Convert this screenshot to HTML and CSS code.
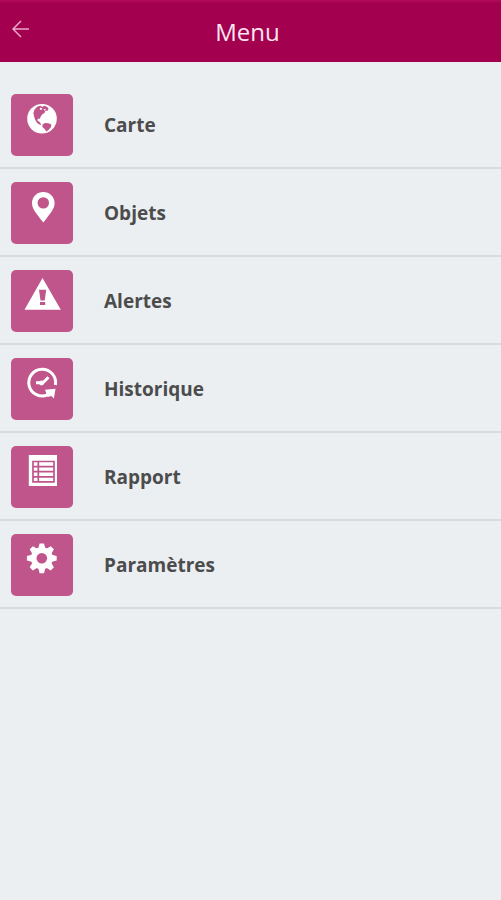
FILE: index.html
```html
<!DOCTYPE html>
<html lang="fr">
<head>
<meta charset="utf-8">
<meta name="viewport" content="width=device-width, initial-scale=1">
<title>Menu</title>
<link rel="stylesheet" href="styles.css">
</head>
<body>
<header class="topbar">
  <button class="back" type="button" aria-label="Retour">
    <svg class="back-icon" viewBox="0 0 18 18" aria-hidden="true"><path d="M17 9H1M9 1L1 9l8 8"/></svg>
  </button>
  <h1 class="title">Menu</h1>
</header>
<nav class="menu">
  <a class="item" href="#carte">
    <svg class="tile" viewBox="0 0 62 62" aria-hidden="true">
      <circle cx="31" cy="24.7" r="14.8"/>
      <path class="cut" d="M23.5 15.5l3-3 3-.7 2 1.2 1.5-1.2 2.5.8 2 1.7-.6 2.4-2.4-.2-.8 2.3-2.4 1.5-1.6 2.2-.8 2.2-2.2.1-.2 2 2.2 1.2 1.4 2.2-.8.7-3.2-2-1.8-3-1.2-3.200-.7-3.600z"/>
      <path class="cut" d="M31.500 30.500l2.400-1.600 3.500.4 3 1.300-.5 2.700-2.400 2.700-2.200 1.500-1.600-2.600-2.300-1.900z"/>
      <path d="M29.300 13.600l2 .8-.8 1.600-1.800-.6zM32.600 15.300l1.700-.5.3 1.300-1.500.4z"/>
    </svg>
    <span class="label">Carte</span>
  </a>
  <a class="item" href="#objets">
    <svg class="tile" viewBox="0 0 62 62" aria-hidden="true">
      <path fill-rule="evenodd" d="M32.3 10c-6.3 0-11.3 4.8-11.3 11 0 5.4 3.2 9.2 11.3 19.5C40.4 30.2 43.6 26.4 43.6 21c0-6.2-5-11-11.3-11zm0 5.200a5.700 5.700 0 1 1 0 11.400 5.700 5.700 0 0 1 0-11.400z"/>
    </svg>
    <span class="label">Objets</span>
  </a>
  <a class="item" href="#alertes">
    <svg class="tile" viewBox="0 0 62 62" aria-hidden="true">
      <path d="M31.5 8L49.8 39.700H13.500z"/>
      <path class="cut" d="M28 19.800h7.200l-1.500 10.700h-4.200zM29 32h5.200v3H29z"/>
    </svg>
    <span class="label">Alertes</span>
  </a>
  <a class="item" href="#historique">
    <svg class="tile" viewBox="0 0 62 62" aria-hidden="true">
      <path class="ring" d="M44.400 27A13.400 13.400 0 1 0 37 36.700"/>
      <path d="M34 31.700L44.500 30.700 42.900 40.400 40.300 37.900 36.700 39z"/>
      <path class="hands" d="M37.500 19.300L31.200 25.500M25 24.800h4"/>
      <circle cx="30.500" cy="25" r="2.400"/>
    </svg>
    <span class="label">Historique</span>
  </a>
  <a class="item" href="#rapport">
    <svg class="tile" viewBox="0 0 62 62" aria-hidden="true">
      <path d="M17.800 9H46v31H17.800z"/>
      <path class="grid" d="M22 15.500h21v20.400H22zM22 20.600h21M22 25.700h21M22 30.800h21M27.300 15.500v20.400"/>
    </svg>
    <span class="label">Rapport</span>
  </a>
  <a class="item" href="#parametres">
    <svg class="tile" viewBox="0 0 62 62" aria-hidden="true">
      <g transform="translate(30.8 24.3)">
        <circle r="11"/>
        <path id="tooth" d="M-3.500-10l1.300-4.900h4.400L3.500-10zM-3.500 10l1.300 4.900h4.400L3.500 10z"/>
        <use href="#tooth" transform="rotate(45)"/>
        <use href="#tooth" transform="rotate(90)"/>
        <use href="#tooth" transform="rotate(135)"/>
        <circle class="cut" r="5.300"/>
      </g>
    </svg>
    <span class="label">Paramètres</span>
  </a>
</nav>
</body>
</html>
```
FILE: styles.css
```css
* {
  box-sizing: border-box;
}

body {
  margin: 0;
  min-height: 100vh;
  background: #ebeff2;
  color: #4c4c4c;
  font-family: "Open Sans", "Noto Sans", sans-serif;
}

.topbar {
  display: grid;
  grid-template-columns: 40px 1fr 40px;
  align-items: center;
  height: 62px;
  padding-right: 6px;
  background: #a3004f;
  border-top: 2px solid #b00858;
}

.back {
  display: flex;
  padding: 0 0 6px 12px;
  border: 0;
  background: none;
  cursor: pointer;
}

.back-icon {
  width: 18px;
  height: 18px;
  fill: none;
  stroke: #eba9cb;
  stroke-width: 1.5;
}

.title {
  margin: 0;
  color: #fbe6f0;
  font-size: 24px;
  font-weight: 400;
  line-height: 32px;
  text-align: center;
}

.menu {
  padding-top: 19px;
}

.item {
  display: flex;
  align-items: center;
  gap: 31px;
  height: 88px;
  padding: 2px 11px 0;
  border-bottom: 2px solid #d6dbde;
  color: inherit;
  text-decoration: none;
}

.tile {
  width: 62px;
  height: 62px;
  border-radius: 5px;
  background: #bf558b;
  fill: #fff;
}

.cut {
  fill: #bf558b;
}

.ring,
.hands {
  fill: none;
  stroke: #fff;
  stroke-width: 3;
}

.grid {
  fill: none;
  stroke: #bf558b;
  stroke-width: 1.7;
}

.label {
  font-size: 19px;
  font-weight: 700;
  line-height: 26px;
}
```
